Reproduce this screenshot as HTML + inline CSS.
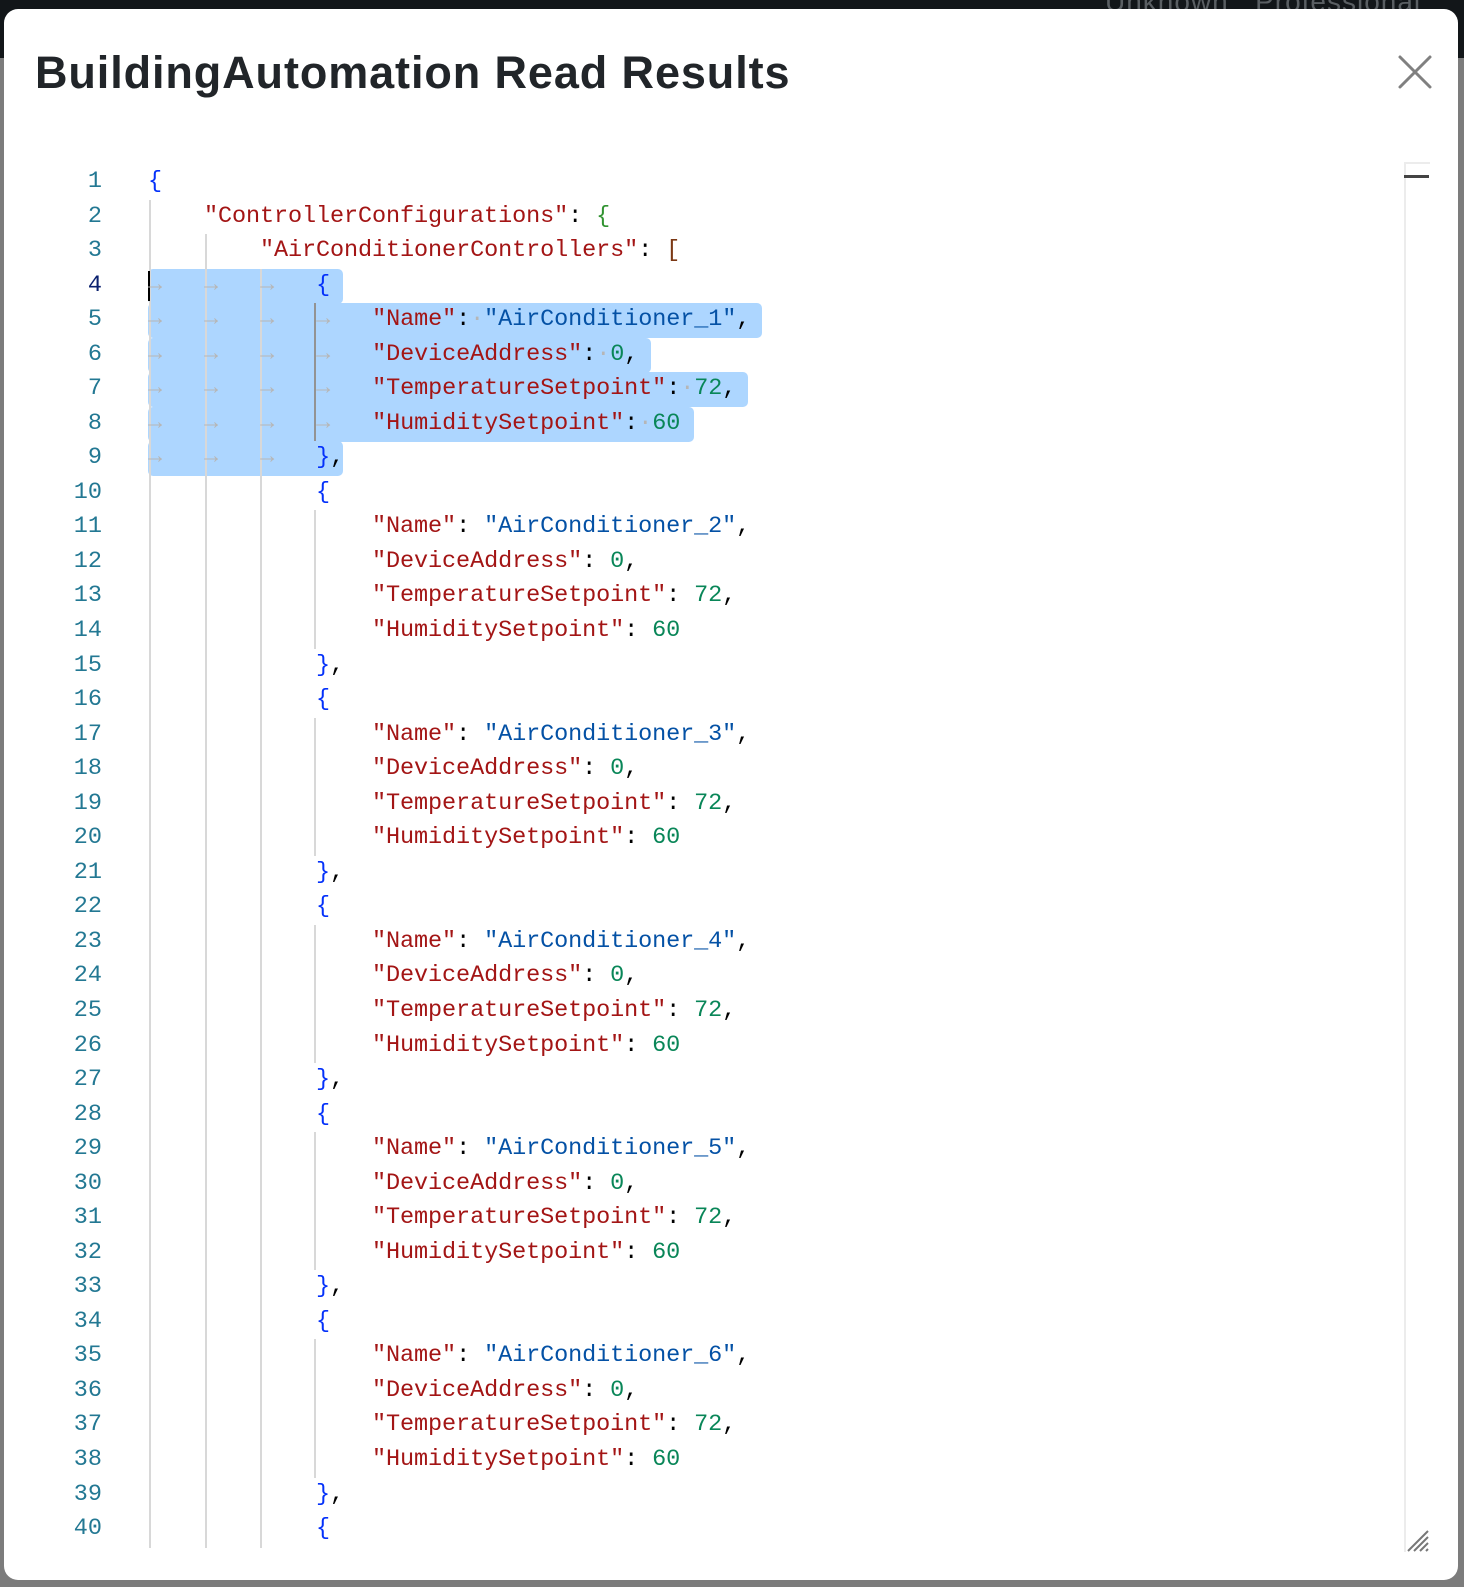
<!DOCTYPE html>
<html><head><meta charset="utf-8"><style>
*{margin:0;padding:0;box-sizing:border-box}
body{width:1464px;height:1587px;background:#7c7c7c;position:relative;overflow:hidden;font-family:"Liberation Sans",sans-serif}
.topbar{position:absolute;left:0;top:0;width:1464px;height:58px;background:#121619}
.topbar span{position:absolute;left:1105px;top:-14px;color:#5a5f63;font-size:28px;letter-spacing:1px}
.modal{position:absolute;left:4px;top:9px;width:1454px;height:1571px;background:#fff;border-radius:14px;overflow:hidden}
h1{position:absolute;left:31px;top:38px;font-size:45px;font-weight:600;color:#212529;letter-spacing:0.9px}
.close{position:absolute;left:1393px;top:45px}
.ed{position:absolute;left:-2px;top:2px;font-family:"Liberation Mono",monospace;font-size:23.5px}
.ln{position:absolute;width:100px;text-align:right;color:#237893;height:34.54px;line-height:34.54px}
.cl{position:absolute;left:146px;white-space:pre;height:34.54px;line-height:34.54px;letter-spacing:-0.1px}
.sel{position:absolute;background:#add6ff;border-radius:5px}
.g{position:absolute;width:2px;background:#d8d8d8}
.k{color:#a31515}.s{color:#0451a5}.n{color:#098658}.b1{color:#0431fa}.b2{color:#319331}.b3{color:#7b3814}.w{color:#b6b6b6}
</style></head><body>
<div class="topbar"><span>Unknown &nbsp;&nbsp;Professional</span></div>
<div class="modal">
<h1>BuildingAutomation Read Results</h1>
<svg class="close" width="36" height="36" viewBox="0 0 36 36"><path d="M3 3L33 33M33 3L3 33" stroke="#808080" stroke-width="3" stroke-linecap="round"/></svg>
<div style="position:absolute;left:1400px;top:153px;width:2px;height:1390px;background:#ececec"></div>
<div style="position:absolute;left:1400px;top:153px;width:26px;height:2px;background:#ececec"></div>
<div style="position:absolute;left:1400px;top:166px;width:25px;height:3px;background:#444"></div>
<svg style="position:absolute;left:1402px;top:1520px" width="24" height="24" viewBox="0 0 24 24"><path d="M2 22L22 2M8 22L22 8M14 22L22 14M20 22L22 20" stroke="#777" stroke-width="2"/></svg>
<div class="ed" id="ed"></div>
</div>
<script>
var P=34.54,T=154,L=[];
function q(c,t){return '<span class="'+c+'">'+t+'</span>'}
var I='    ';
L.push(q('b1','{'));
L.push(I+q('k','"ControllerConfigurations"')+': '+q('b2','{'));
L.push(I+I+q('k','"AirConditionerControllers"')+': '+q('b3','['));
var A=q('w','→')+'   ';
for(var o=1;o<=7;o++){
 if(o==1){
  L.push(A+A+A+q('b1','{'));
  L.push(A+A+A+A+q('k','"Name"')+':'+q('w','·')+q('s','"AirConditioner_1"')+',');
  L.push(A+A+A+A+q('k','"DeviceAddress"')+':'+q('w','·')+q('n','0')+',');
  L.push(A+A+A+A+q('k','"TemperatureSetpoint"')+':'+q('w','·')+q('n','72')+',');
  L.push(A+A+A+A+q('k','"HumiditySetpoint"')+':'+q('w','·')+q('n','60'));
  L.push(A+A+A+q('b1','}')+',');
 } else if(o<7){
  L.push(I+I+I+q('b1','{'));
  L.push(I+I+I+I+q('k','"Name"')+': '+q('s','"AirConditioner_'+o+'"')+',');
  L.push(I+I+I+I+q('k','"DeviceAddress"')+': '+q('n','0')+',');
  L.push(I+I+I+I+q('k','"TemperatureSetpoint"')+': '+q('n','72')+',');
  L.push(I+I+I+I+q('k','"HumiditySetpoint"')+': '+q('n','60'));
  L.push(I+I+I+q('b1','}')+',');
 } else L.push(I+I+I+q('b1','{'));
}
var h='';
var sw=[195,614,503,600,546,195];
for(var i=0;i<6;i++){h+='<div class="sel" style="left:146px;top:'+(T+(3+i)*P)+'px;width:'+sw[i]+'px;height:'+(P+0.5)+'px"></div>'}
var bot=1537;
h+='<div class="g" style="left:147px;top:'+(T+P)+'px;height:'+(bot-T-P)+'px"></div>';
h+='<div class="g" style="left:203px;top:'+(T+2*P)+'px;height:'+(bot-T-2*P)+'px"></div>';
h+='<div class="g" style="left:258px;top:'+(T+3*P)+'px;height:'+(bot-T-3*P)+'px"></div>';
for(var o=0;o<6;o++){var s=4+o*6;h+='<div class="g" style="left:312px;top:'+(T+s*P)+'px;height:'+(4*P)+'px;'+(o==0?'background:#939393':'')+'"></div>'}
h+='<div style="position:absolute;left:146px;top:'+(T+3*P+2)+'px;width:2px;height:30px;background:#000"></div>';
for(var i=0;i<L.length;i++){
 h+='<div class="ln" style="top:'+(T+i*P)+'px;'+(i==3?'color:#0b216f':'')+'">'+(i+1)+'</div>';
 h+='<div class="cl" style="top:'+(T+i*P)+'px">'+L[i]+'</div>';
}
document.getElementById('ed').innerHTML=h;
</script>
</body></html>
